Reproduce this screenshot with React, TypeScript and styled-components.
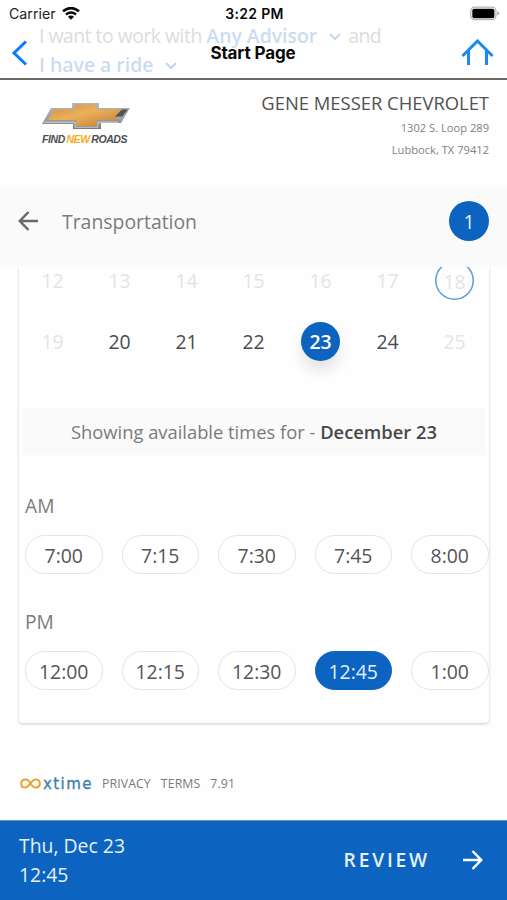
import React from "react";
import styled, { createGlobalStyle } from "styled-components";

const BLUE = "#0d64c0";

const GlobalStyle = createGlobalStyle`
  * { box-sizing: border-box; }
  body {
    margin: 0;
    background: #fff;
    font-family: "Open Sans", "Noto Sans", sans-serif;
    color: #4c4c4e;
    overflow: hidden;
  }
  button { font: inherit; margin: 0; padding: 0; border: 0; background: none; color: inherit; }
  svg { display: block; flex: none; }
`;

const Screen = styled.div`
  width: 507px;
  height: 900px;
  display: flex;
  flex-direction: column;
  background: #fefefe;
  overflow: hidden;
`;

const TopBar = styled.header`
  position: relative;
  height: 80px;
  flex: none;
  border-bottom: 2px solid #6a6a6a;
  background: #fff;
  font-family: Inter, "Liberation Sans", sans-serif;
  color: #0a0a0a;
`;

const GhostText = styled.div`
  position: absolute;
  left: 39px;
  top: 21px;
  font: 400 19.4px/29px "Open Sans", sans-serif;
  color: #dcdcde;
  white-space: nowrap;
`;

const GhostLine = styled.div`
  display: flex;
  align-items: center;
  letter-spacing: -0.5px;
  white-space: pre;
`;

const GhostLink = styled.span`
  display: flex;
  align-items: center;
  gap: 7px;
  margin-right: 7px;
  font-weight: 600;
  letter-spacing: 0;
  color: #cbdcf2;
`;

const StatusRow = styled.div`
  position: relative;
  display: grid;
  grid-template-columns: 1fr auto 1fr;
  align-items: center;
  height: 27px;
  padding: 0 7px 0 9px;
  font-size: 14px;
`;

const Carrier = styled.div`
  display: flex;
  align-items: center;
  gap: 6px;
  font-size: 14.2px;
  color: #222;
`;

const Clock = styled.div`
  font-weight: 600;
  font-size: 14px;
  letter-spacing: 0.35px;
`;

const BatterySlot = styled.div`
  justify-self: end;
`;

const NavRow = styled.div`
  position: relative;
  display: grid;
  grid-template-columns: 1fr auto 1fr;
  align-items: center;
  height: 51px;
  padding: 0 13px 0 11px;
`;

const NavTitle = styled.h1`
  margin: 0 0 0 1px;
  font-size: 17px;
  font-weight: 700;
  letter-spacing: -0.12px;
`;

const HomeButton = styled.button`
  justify-self: end;
`;

const Dealer = styled.section`
  display: flex;
  justify-content: space-between;
  height: 108px;
  flex: none;
  padding: 10px 18px 0 41px;
`;

const Brand = styled.div`
  padding-top: 13px;
  width: 90px;
`;

const Slogan = styled.div`
  display: flex;
  gap: 1.5px;
  margin: 3px 0 0 1px;
  font: italic 700 10.5px/12px "Liberation Sans", sans-serif;
  letter-spacing: -0.4px;
  color: #4d4e52;
`;

const SloganAccent = styled.span`
  color: #f5ac22;
`;

const DealerInfo = styled.address`
  font-style: normal;
  text-align: right;
  color: #828284;
  font-size: 11.15px;
  line-height: 22px;
`;

const DealerName = styled.div`
  font-size: 18.4px;
  line-height: 25px;
  margin-bottom: 2px;
  color: #515153;
`;

const StepBar = styled.section`
  display: flex;
  align-items: center;
  height: 79px;
  flex: none;
  padding: 0 18px 13px;
  background: #fafafa;
`;

const StepTitle = styled.h2`
  flex: 1;
  margin: 0 0 0 24px;
  font-size: 19.4px;
  font-weight: 400;
  color: #7b7b7d;
`;

const StepCount = styled.span`
  width: 40px;
  height: 40px;
  border-radius: 50%;
  display: grid;
  place-items: center;
  background: ${BLUE};
  color: #e4f0fc;
  font-size: 19.4px;
`;

const Viewport = styled.main`
  flex: none;
  height: 553px;
  padding: 0 18px 0 19px;
  overflow: hidden;
`;

const Card = styled.section`
  height: 456px;
  border-radius: 0 0 4px 4px;
  background: #fefefe;
  box-shadow: 0 1px 3px rgba(0, 0, 0, 0.2);
`;

const Calendar = styled.div`
  height: 105px;
  display: flex;
  flex-direction: column;
  justify-content: flex-end;
`;

const Week = styled.div`
  flex: none;
  display: grid;
  grid-template-columns: repeat(7, 1fr);
  justify-items: center;
  align-items: center;
  height: 61px;
  margin-right: 1px;
`;

type DayState = "off" | "open" | "today" | "selected";

const Day = styled.button<{ $state: DayState }>`
  width: 39px;
  height: 39px;
  border-radius: 50%;
  display: grid;
  place-items: center;
  font-size: 19.4px;
  line-height: 1;
  color: ${(p) => (p.$state === "open" ? "#4c4c4e" : p.$state === "selected" ? "#fff" : "#e4e4e6")};
  ${(p) => p.$state === "selected" && `background: ${BLUE}; font-weight: 600; box-shadow: 0 10px 14px rgba(0,0,0,0.1);`}
  ${(p) => p.$state === "today" && `box-shadow: inset 0 0 0 1.5px #5f9ad8; padding-top: 2px;`}
`;

const Showing = styled.div`
  height: 47px;
  margin: 36px 4px 0;
  display: flex;
  align-items: center;
  justify-content: center;
  background: #fafafa;
  font-size: 18.35px;
  color: #7b7b7d;
  white-space: pre;
`;

const ShowingDate = styled.strong`
  font-weight: 600;
  color: #48484a;
`;

const Period = styled.section<{ $top: number }>`
  padding: ${(p) => p.$top}px 0 0 6px;
`;

const PeriodLabel = styled.h3`
  margin: 0;
  height: 27px;
  font-size: 19.2px;
  line-height: 27px;
  font-weight: 400;
  color: #7b7b7d;
`;

const Slots = styled.div`
  display: grid;
  grid-template-columns: repeat(5, 77.5px);
  column-gap: 19px;
  margin-top: 16px;
`;

const Slot = styled.button<{ $selected?: boolean }>`
  height: 39px;
  border-radius: 20px;
  border: 1px solid ${(p) => (p.$selected ? BLUE : "#e4e4e6")};
  background: ${(p) => (p.$selected ? BLUE : "#fff")};
  color: ${(p) => (p.$selected ? "#e4f0fc" : "#555557")};
  font-size: 19.4px;
  line-height: 35px;
  padding-top: 2px;
`;

const Footer = styled.footer`
  display: flex;
  align-items: center;
  height: 24px;
  margin-top: 48px;
  padding-left: 1px;
  gap: 10px;
  font-size: 12.3px;
  font-weight: 500;
  color: #79797b;
`;

const FooterItem = styled.span`
  letter-spacing: 0.1px;
`;

const Xtime = styled.div`
  display: flex;
  align-items: center;
  width: 72px;
  gap: 2px;
  padding-top: 1px;
  font: 400 15px/20px "DejaVu Sans", sans-serif;
  letter-spacing: 1.4px;
  -webkit-text-stroke: 0.3px #397fae;
  color: #397fae;
`;

const BottomBar = styled.section`
  display: flex;
  justify-content: space-between;
  flex: 1;
  padding: 10px 24px 0 19px;
  border-top: 1px solid #5f97d6;
  background: ${BLUE};
  color: #e4f0fc;
`;

const Appointment = styled.div`
  font-size: 19.4px;
  line-height: 29px;
`;

const ReviewButton = styled.button`
  display: flex;
  align-items: center;
  height: 57px;
  gap: 33px;
  font-size: 19.2px;
  font-weight: 600;
  letter-spacing: 2.8px;
`;

const Chevron = () => (
  <svg width="12" height="12" viewBox="0 0 12 12" fill="none" stroke="#c2d6ef" strokeWidth="2">
    <path d="M1 4l5 5 5-5" />
  </svg>
);

const Wifi = () => (
  <svg width="18" height="13" viewBox="0 0 18 13" fill="none" stroke="#0a0a0a">
    <path d="M1 4.3Q9-2.2 17 4.3" strokeWidth="2.6" />
    <path d="M3.9 7.5Q9 3.4 14.1 7.5" strokeWidth="2.3" />
    <path d="M9 12.8L5.9 9.7Q9 7.4 12.1 9.7Z" fill="#0a0a0a" stroke="none" />
  </svg>
);

const Battery = () => (
  <svg width="30" height="15" viewBox="0 0 31 15">
    <rect x="0.8" y="0.9" width="26" height="13" rx="4" fill="#fff" stroke="#b4b4b4" strokeWidth="1.3" />
    <rect x="2.4" y="2.5" width="22.8" height="9.8" rx="2" fill="#000" />
    <path d="M28.3 5v4.8q1.9-.8 1.9-2.4T28.3 5z" fill="#aaa" />
  </svg>
);

const Arrow = ({ back, color }: { back?: boolean; color: string }) => (
  <svg width="20" height="20" viewBox="0 0 20 20" fill="none" stroke={color} strokeWidth="2.5">
    <path d={back ? "M20 10H2M10.5 1L1.8 10l8.7 9" : "M0 10h18M9.5 1l8.7 9-8.7 9"} />
  </svg>
);

const Bowtie = () => (
  <svg width="90" height="27" viewBox="0 0 90 27">
    <defs>
      <linearGradient id="gold" x1="0" y1="0" x2="1" y2="1">
        <stop offset="0" stopColor="#cf8f45" />
        <stop offset=".45" stopColor="#ecb059" />
        <stop offset="1" stopColor="#c17d33" />
      </linearGradient>
      <linearGradient id="chrome" x1="0" y1="0" x2="0" y2="1">
        <stop offset="0" stopColor="#b8b8b8" />
        <stop offset=".6" stopColor="#a0a0a0" />
        <stop offset="1" stopColor="#74787b" />
      </linearGradient>
    </defs>
    <path d="M10 5h21V0h27v5h31l-9 15H60v6H32v-5H1z" fill="url(#chrome)" />
    <path d="M13 6.5h21V1.5h21v5h26L74 17H56v6H35v-6H7z" fill="url(#gold)" />
    <path d="M81 6.5h6l-6 7h-7z" fill="#4d5355" />
    <path d="M3 19.2h31v5h23v-5h20" fill="none" stroke="#d2d4d5" strokeWidth="1" />
  </svg>
);

const Infinity = () => (
  <svg width="21" height="11" viewBox="0 0 21 11" fill="none" stroke="#eea22f" strokeWidth="2">
    <path d="M6 1.6C2.5 1.6 1.2 3.5 1.2 5.7S2.5 9.6 5 9.6C9.6 9.6 11 1.6 15.7 1.6c2.5 0 4.1 1.6 4.1 4s-1.6 4-4.1 4C11 9.6 10.2 1.6 6 1.6z" />
  </svg>
);

const weeks: { day: number; state: DayState }[][] = [
  [12, 13, 14, 15, 16, 17, 18].map((day) => ({ day, state: day === 18 ? "today" : "off" })),
  [19, 20, 21, 22, 23, 24, 25].map((day) => ({
    day,
    state: day === 23 ? "selected" : day === 19 || day === 25 ? "off" : "open",
  })),
];

const periods = [
  { label: "AM", top: 37, times: ["7:00", "7:15", "7:30", "7:45", "8:00"] },
  { label: "PM", top: 34, times: ["12:00", "12:15", "12:30", "12:45", "1:00"] },
];

export default function App() {
  return (
    <>
      <GlobalStyle />
      <Screen>
        <TopBar>
          <GhostText>
            <GhostLine>
              I want to work with <GhostLink>Any Advisor <Chevron /></GhostLink>and
            </GhostLine>
            <GhostLine>
              <GhostLink>I have a ride <Chevron /></GhostLink>
            </GhostLine>
          </GhostText>
          <StatusRow>
            <Carrier>Carrier <Wifi /></Carrier>
            <Clock>3:22 PM</Clock>
            <BatterySlot><Battery /></BatterySlot>
          </StatusRow>
          <NavRow>
            <svg width="17" height="26" viewBox="0 0 17 26" fill="none" stroke="#0a7aff" strokeWidth="3">
              <path d="M15 1.5L3 13l12 11.5" />
            </svg>
            <NavTitle>Start Page</NavTitle>
            <HomeButton aria-label="Home">
              <svg width="33" height="27" viewBox="0 0 33 27" fill="none" stroke="#1b8af0" strokeWidth="3">
                <path d="M1.5 17L16.5 2l15 15M7.5 11.5V26M25.5 11.5V26" />
              </svg>
            </HomeButton>
          </NavRow>
        </TopBar>

        <Dealer>
          <Brand>
            <Bowtie />
            <Slogan>FIND<SloganAccent>NEW</SloganAccent>ROADS</Slogan>
          </Brand>
          <DealerInfo>
            <DealerName>GENE MESSER CHEVROLET</DealerName>
            <div>1302 S. Loop 289</div>
            <div>Lubbock, TX 79412</div>
          </DealerInfo>
        </Dealer>

        <StepBar>
          <Arrow back color="#69696b" />
          <StepTitle>Transportation</StepTitle>
          <StepCount>1</StepCount>
        </StepBar>

        <Viewport>
          <Card>
            <Calendar>
              {weeks.map((week, i) => (
                <Week key={i}>
                  {week.map(({ day, state }) => <Day key={day} $state={state}>{day}</Day>)}
                </Week>
              ))}
            </Calendar>
            <Showing>Showing available times for - <ShowingDate>December 23</ShowingDate></Showing>
            {periods.map(({ label, top, times }) => (
              <Period key={label} $top={top}>
                <PeriodLabel>{label}</PeriodLabel>
                <Slots>
                  {times.map((t) => <Slot key={t} $selected={t === "12:45"}>{t}</Slot>)}
                </Slots>
              </Period>
            ))}
          </Card>
          <Footer>
            <Xtime><Infinity />xtime</Xtime>
            <FooterItem>PRIVACY</FooterItem>
            <FooterItem>TERMS</FooterItem>
            <FooterItem>7.91</FooterItem>
          </Footer>
        </Viewport>

        <BottomBar>
          <Appointment>
            <div>Thu, Dec 23</div>
            <div>12:45</div>
          </Appointment>
          <ReviewButton>REVIEW <Arrow color="#fff" /></ReviewButton>
        </BottomBar>
      </Screen>
    </>
  );
}
